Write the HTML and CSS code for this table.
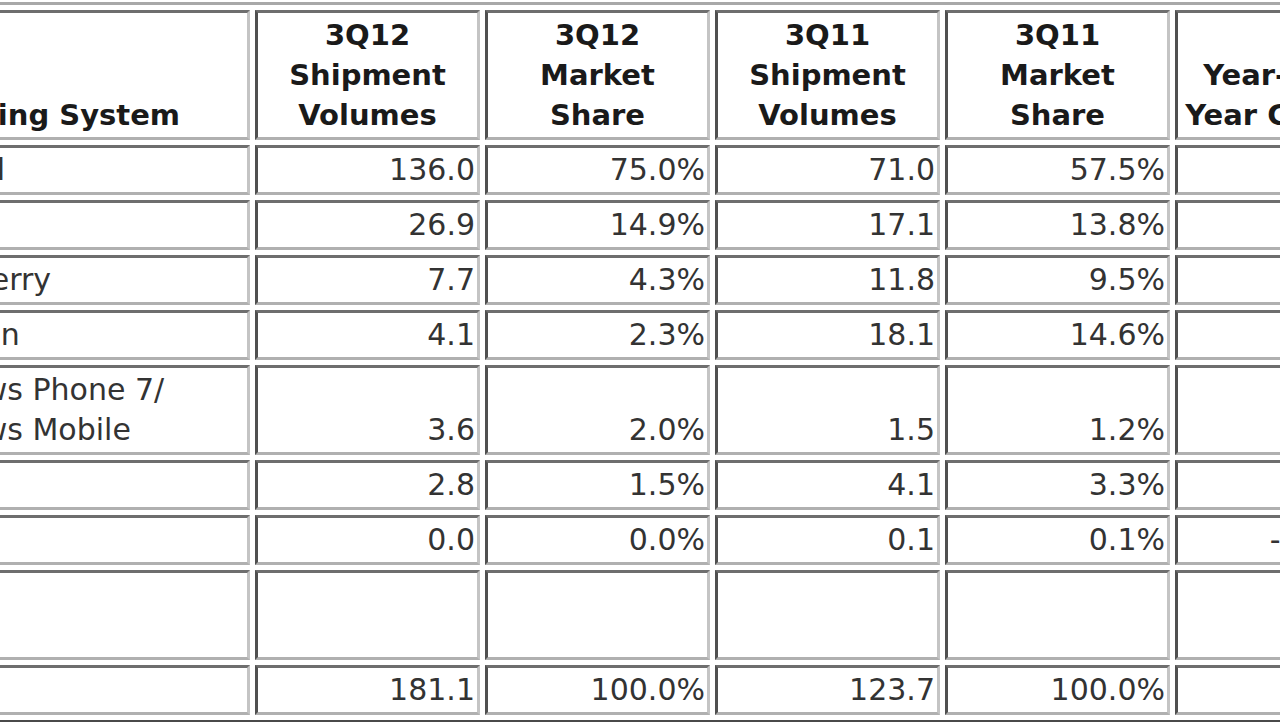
FILE: index.html
```html
<!DOCTYPE html>
<html>
<head>
<meta charset="utf-8">
<link rel="stylesheet" href="styles.css">
</head>
<body>
<table class="share">
  <thead>
    <tr>
      <th class="os">Operating System</th>
      <th class="num">3Q12<br>Shipment<br>Volumes</th>
      <th class="num">3Q12<br>Market<br>Share</th>
      <th class="num">3Q11<br>Shipment<br>Volumes</th>
      <th class="num">3Q11<br>Market<br>Share</th>
      <th class="num">Year-over-<br>Year Change</th>
    </tr>
  </thead>
  <tbody>
    <tr><td class="label">Android</td><td>136.0</td><td>75.0%</td><td>71.0</td><td>57.5%</td><td>91.5%</td></tr>
    <tr><td class="label">iOS</td><td>26.9</td><td>14.9%</td><td>17.1</td><td>13.8%</td><td>57.3%</td></tr>
    <tr><td class="label">BlackBerry</td><td>7.7</td><td>4.3%</td><td>11.8</td><td>9.5%</td><td>-34.7%</td></tr>
    <tr><td class="label">Symbian</td><td>4.1</td><td>2.3%</td><td>18.1</td><td>14.6%</td><td>-77.3%</td></tr>
    <tr><td class="label">Windows Phone 7/<br>Windows Mobile</td><td>3.6</td><td>2.0%</td><td>1.5</td><td>1.2%</td><td>140.0%</td></tr>
    <tr><td class="label">Linux</td><td>2.8</td><td>1.5%</td><td>4.1</td><td>3.3%</td><td>-31.7%</td></tr>
    <tr><td class="label">Others</td><td>0.0</td><td>0.0%</td><td>0.1</td><td>0.1%</td><td>-100.0%</td></tr>
    <tr><td class="label">&nbsp;<br>&nbsp;</td><td>&nbsp;</td><td>&nbsp;</td><td>&nbsp;</td><td>&nbsp;</td><td>&nbsp;</td></tr>
    <tr><td class="label">Total</td><td>181.1</td><td>100.0%</td><td>123.7</td><td>100.0%</td><td>46.4%</td></tr>
  </tbody>
</table>
</body>
</html>
```

FILE: styles.css
```css
html, body {
  margin: 0;
  padding: 0;
  overflow: hidden;
  background: #ffffff;
}

.share {
  margin: 2px 0 0 -124px;
  border-collapse: separate;
  border-spacing: 5px;
  table-layout: fixed;
  width: 1532px;
  border-style: solid;
  border-width: 3px;
  border-color: #a8a8a8 #4a4a4a #4a4a4a #a8a8a8;
  font-family: "DejaVu Sans", Verdana, sans-serif;
}

.share th,
.share td {
  box-sizing: border-box;
  border-style: solid;
  border-width: 3px;
  border-color: #6e6e6e #c4c4c4 #b0b0b0 #505050;
  padding: 2px;
  line-height: 40px;
  vertical-align: bottom;
  width: 225px;
}

.share th {
  font-size: 29px;
  font-weight: bold;
  color: #1a1a1a;
}

.share th.os {
  width: 366px;
  text-align: left;
  text-indent: -4px;
}

.share th.num {
  text-align: center;
}

.share td {
  font-size: 30px;
  color: #333333;
  text-align: right;
  white-space: nowrap;
}

.share td.label {
  text-align: left;
}
```
